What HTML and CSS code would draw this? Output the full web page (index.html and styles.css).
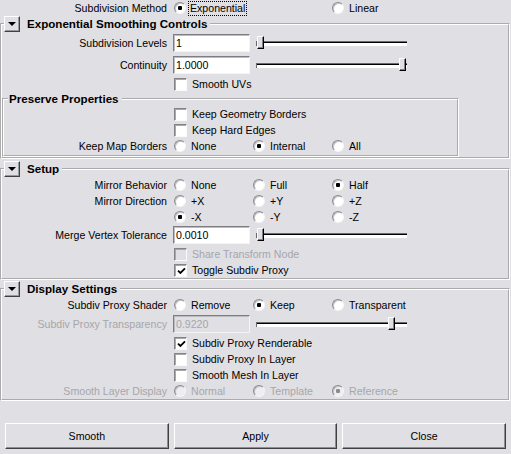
FILE: index.html
```html
<!DOCTYPE html>
<html>
<head>
<meta charset="utf-8">
<title>Smooth Options</title>
<link rel="stylesheet" href="styles.css">
</head>
<body>
<div class="dialog">
  <div class="row">
    <span class="lbl">Subdivision Method</span>
    <div class="radios">
      <span class="opt"><span class="rb on"></span><span class="focus">Exponential</span></span>
      <span class="opt"></span>
      <span class="opt"><span class="rb"></span><span>Linear</span></span>
    </div>
  </div>

  <fieldset class="section">
    <legend><div class="shead"><span class="tog"></span><span class="stitle">Exponential Smoothing Controls</span></div></legend>
    <div class="row frow">
      <span class="lbl">Subdivision Levels</span>
      <span class="field">1</span>
      <div class="slider" style="--v:0"><span class="track"></span><span class="thumb"></span></div>
    </div>
    <div class="row frow">
      <span class="lbl">Continuity</span>
      <span class="field">1.0000</span>
      <div class="slider" style="--v:1"><span class="track"></span><span class="thumb"></span></div>
    </div>
    <div class="row">
      <span class="lbl"></span>
      <span class="cbopt"><span class="cb"></span><span>Smooth UVs</span></span>
    </div>
    <fieldset class="group">
      <legend class="gtitle">Preserve Properties</legend>
      <div class="row">
        <span class="lbl"></span>
        <span class="cbopt"><span class="cb"></span><span>Keep Geometry Borders</span></span>
      </div>
      <div class="row">
        <span class="lbl"></span>
        <span class="cbopt"><span class="cb"></span><span>Keep Hard Edges</span></span>
      </div>
      <div class="row">
        <span class="lbl">Keep Map Borders</span>
        <div class="radios">
          <span class="opt"><span class="rb"></span><span>None</span></span>
          <span class="opt"><span class="rb on"></span><span>Internal</span></span>
          <span class="opt"><span class="rb"></span><span>All</span></span>
        </div>
      </div>
    </fieldset>
  </fieldset>

  <fieldset class="section">
    <legend><div class="shead"><span class="tog"></span><span class="stitle">Setup</span></div></legend>
    <div class="row">
      <span class="lbl">Mirror Behavior</span>
      <div class="radios">
        <span class="opt"><span class="rb"></span><span>None</span></span>
        <span class="opt"><span class="rb"></span><span>Full</span></span>
        <span class="opt"><span class="rb on"></span><span>Half</span></span>
      </div>
    </div>
    <div class="row">
      <span class="lbl">Mirror Direction</span>
      <div class="radios">
        <span class="opt"><span class="rb"></span><span>+X</span></span>
        <span class="opt"><span class="rb"></span><span>+Y</span></span>
        <span class="opt"><span class="rb"></span><span>+Z</span></span>
      </div>
    </div>
    <div class="row short">
      <span class="lbl"></span>
      <div class="radios">
        <span class="opt"><span class="rb on"></span><span>-X</span></span>
        <span class="opt"><span class="rb"></span><span>-Y</span></span>
        <span class="opt"><span class="rb"></span><span>-Z</span></span>
      </div>
    </div>
    <div class="row frow">
      <span class="lbl">Merge Vertex Tolerance</span>
      <span class="field">0.0010</span>
      <div class="slider" style="--v:0"><span class="track"></span><span class="thumb"></span></div>
    </div>
    <div class="row dis">
      <span class="lbl"></span>
      <span class="cbopt"><span class="cb"></span><span>Share Transform Node</span></span>
    </div>
    <div class="row">
      <span class="lbl"></span>
      <span class="cbopt"><span class="cb"><svg class="tick" width="9" height="9" viewBox="0 0 9 9"><path d="M1 3.6 L3.4 6 L8 1.4" fill="none" stroke="#000" stroke-width="1.8"/></svg></span><span>Toggle Subdiv Proxy</span></span>
    </div>
  </fieldset>

  <fieldset class="section">
    <legend><div class="shead"><span class="tog"></span><span class="stitle">Display Settings</span></div></legend>
    <div class="row">
      <span class="lbl">Subdiv Proxy Shader</span>
      <div class="radios">
        <span class="opt"><span class="rb"></span><span>Remove</span></span>
        <span class="opt"><span class="rb on"></span><span>Keep</span></span>
        <span class="opt"><span class="rb"></span><span>Transparent</span></span>
      </div>
    </div>
    <div class="row frow dis">
      <span class="lbl">Subdiv Proxy Transparency</span>
      <span class="field">0.9220</span>
      <div class="slider" style="--v:0.922"><span class="track"></span><span class="thumb"></span></div>
    </div>
    <div class="row">
      <span class="lbl"></span>
      <span class="cbopt"><span class="cb"><svg class="tick" width="9" height="9" viewBox="0 0 9 9"><path d="M1 3.6 L3.4 6 L8 1.4" fill="none" stroke="#000" stroke-width="1.8"/></svg></span><span>Subdiv Proxy Renderable</span></span>
    </div>
    <div class="row">
      <span class="lbl"></span>
      <span class="cbopt"><span class="cb"></span><span>Subdiv Proxy In Layer</span></span>
    </div>
    <div class="row">
      <span class="lbl"></span>
      <span class="cbopt"><span class="cb"></span><span>Smooth Mesh In Layer</span></span>
    </div>
    <div class="row dis">
      <span class="lbl">Smooth Layer Display</span>
      <div class="radios">
        <span class="opt"><span class="rb"></span><span>Normal</span></span>
        <span class="opt"><span class="rb"></span><span>Template</span></span>
        <span class="opt"><span class="rb on"></span><span>Reference</span></span>
      </div>
    </div>
  </fieldset>

  <div class="buttons">
    <span class="btn">Smooth</span>
    <span class="btn">Apply</span>
    <span class="btn">Close</span>
  </div>
</div>
</body>
</html>
```

FILE: styles.css
```css
* { box-sizing: border-box; }
html, body { margin: 0; padding: 0; }
body {
  background: #e0dfe3;
  font-family: "Liberation Sans", Arial, sans-serif;
  font-size: 10.6px;
  color: #000;
  width: 511px;
  height: 454px;
  overflow: hidden;
}
.dialog { display: flex; flex-direction: column; --lw: 167px; }

.row { display: flex; align-items: center; height: 16px; flex: none; }
.row.short { height: 15px; }
.row.frow { height: 22px; }
.lbl { width: var(--lw); flex: none; text-align: right; white-space: nowrap; }

.radios { display: flex; margin-left: 7px; }
.opt { width: 79px; flex: none; display: flex; align-items: center; gap: 5px; white-space: nowrap; }
.rb {
  width: 12px; height: 12px; flex: none; position: relative;
  border-radius: 50%;
  background: #fff;
  border: 1px solid;
  border-color: #8a8a8e #f6f6f6 #f6f6f6 #8a8a8e;
  box-shadow: inset 1px 1px 0 #c4c4c8;
}
.rb.on::after {
  content: ""; position: absolute; left: 3px; top: 3px;
  width: 4px; height: 4px; border-radius: 1px; background: #000;
}
.focus { outline: 1px dotted #000; padding: 0 1px; margin-left: -2px; line-height: 13px; }

.cbopt { display: flex; align-items: center; gap: 5px; margin-left: 7px; white-space: nowrap; }
.cb {
  width: 13px; height: 13px; flex: none; position: relative;
  background: #fff;
  border: 1px solid;
  border-color: #848488 #fafafa #fafafa #848488;
  box-shadow: inset 1px 1px 0 #a8a8ac;
}
.tick { position: absolute; left: 2px; top: 2px; }

.field {
  margin-left: 6px;
  width: 77px; height: 18px; flex: none;
  background: #fff;
  border: 1px solid;
  border-color: #7e7e82 #f4f4f4 #f4f4f4 #7e7e82;
  box-shadow: inset 1px 1px 0 #bdbdc1;
  padding: 0 2px;
  line-height: 16px;
}
.slider { position: relative; width: 151px; height: 18px; margin-left: 6px; flex: none; }
.track {
  position: absolute; left: 0; right: 0; top: 7px; height: 5px;
  background: #fff;
  border-top: 1px solid #6a6a6a;
  border-left: 1px solid #6a6a6a;
  box-shadow: inset 0 1px 0 #000;
}
.thumb {
  position: absolute; top: 2px;
  left: calc(1px + var(--v) * 142px);
  width: 7px; height: 13px;
  background: #e0dfe3;
  border: 1px solid;
  border-color: #fff #000 #000 #fff;
  box-shadow: inset -1px -1px 0 #808080;
}

.dis { color: #a6a6aa; }
.dis .field { background: #e0dfe3; }
.dis .cb { background: #e0dfe3; }
.dis .rb { background: #eeeef0; }
.dis .rb.on::after { background: #8c8c90; }

.section {
  margin: 0 1px 0 0;
  padding: 0;
  min-inline-size: 0;
  width: 510px;
  border: 2px groove #fff;
  --lw: 165px;
}
.section + .section { margin-top: 2px; }
.section:last-of-type { margin-top: 1px; }
.section > legend { padding: 0 3px 0 0; margin-left: 2px; }
.shead { display: flex; align-items: center; height: 16px; gap: 7px; }
.tog {
  width: 16px; height: 16px; flex: none; position: relative;
  background: #e0dfe3;
  border: 1px solid;
  border-color: #fff #404040 #404040 #fff;
  box-shadow: inset -1px -1px 0 #9a9a9e;
}
.tog::after {
  content: ""; position: absolute; left: 3px; top: 5px;
  border-left: 4px solid transparent;
  border-right: 4px solid transparent;
  border-top: 4px solid #000;
}
.stitle { font-weight: bold; font-size: 11.6px; line-height: 16px; white-space: nowrap; }

.group {
  margin: 0;
  padding: 0 0 1px 0;
  min-inline-size: 0;
  width: 457px;
  border: 2px groove #fff;
  --lw: 163px;
}
.gtitle {
  font-weight: bold; font-size: 11.6px; line-height: 14px;
  padding: 0 3px 0 1px; margin-left: 4px; white-space: nowrap;
}

.buttons {
  display: grid;
  grid-template-columns: 1fr 1fr 1fr;
  gap: 5px;
  padding: 0 5px;
  margin-top: 22px;
}
.btn {
  height: 26px;
  display: flex; align-items: center; justify-content: center;
  background: #e0dfe3;
  border: 1px solid;
  border-color: #fff #404040 #404040 #fff;
  box-shadow: inset -1px -1px 0 #8e8e92;
}
```
